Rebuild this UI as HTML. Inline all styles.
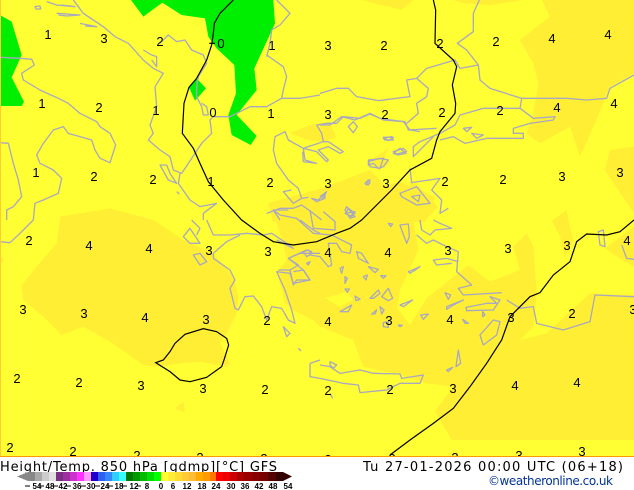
<!DOCTYPE html>
<html><head><meta charset="utf-8"><style>
html,body{margin:0;padding:0;background:#fff;width:634px;height:490px;overflow:hidden}
svg{display:block}
.c path{fill:none;stroke:#a8a8c0;stroke-width:1.3;vector-effect:non-scaling-stroke;stroke-linejoin:round}
.k path{fill:none;stroke:#000;stroke-width:1.2;vector-effect:non-scaling-stroke}
.l text{font:13px "Liberation Sans",sans-serif;text-anchor:middle;fill:#000}
.s text{font:bold 8px "Liberation Sans",sans-serif;text-anchor:middle;fill:#000}
</style></head><body>
<svg width="634" height="490" viewBox="0 0 634 490" xmlns="http://www.w3.org/2000/svg">
<rect width="634" height="457" fill="#ffff33"/>
<g fill="#ffee33">
<g transform="scale(.33333) translate(0,660)">
<path d="M180,0 170,70 110,140 65,195 70,240 130,290 185,345 250,320 330,365 430,435 470,440 540,430 600,425 680,440 690,430 660,370 680,340 710,280 715,230 700,170 640,100 550,60 460,0 330,-35 180,-10Z"/>
<path d="M525,565 550,545 555,578Z"/><path d="M0,105 12,122 0,130Z"/>
</g>
<path d="M290,133 313,124 330,122 336,137 323,142 308,140Z"/>
<path d="M268,203 323,188 370,170 385,185 400,182 435,197 425,222 273,222Z"/>
<path d="M372,160 388,148 380,172Z"/>
<g transform="translate(320,220) scale(.33333)">
<path d="M-141,-30 280,-30 280,0 295,90 240,210 232,265 270,315 320,235 445,135 510,185 600,150 580,80 620,40 640,80 650,220 640,320 600,360 680,340 810,220 942,225 942,660 395,660 345,575 400,500 320,490 240,465 130,440 100,360 0,320 -21,300 -81,270 -105,249 -129,156 -99,120 -114,60Z"/>
<path d="M15,234 81,216 99,240 60,261Z" fill="#ffff33"/>
<path d="M695,0 745,0 760,60 735,110 720,50Z"/>
<path d="M855,85 942,20 942,140 900,115Z"/>
</g>
<g transform="translate(320,0) scale(.33333)">
<path d="M600,120 690,50 665,0 942,0 942,220 870,260 820,380 780,470 750,380 660,430 620,400 640,340 655,250 640,190Z"/>
<path d="M942,440 870,450 855,510 942,640Z"/>
<path d="M125,0 245,30 280,0Z"/><path d="M400,0 435,10 510,15 610,0Z"/>
<path d="M0,370 30,370 50,405 20,440 0,440Z" fill="none"/>
<path d="M190,470 210,485 195,505 170,490Z"/>
<path d="M740,630 700,660 745,660Z"/>
</g>
<path d="M410,182 420,187 438,207 423,222 410,222Z"/>
</g>
<g fill="#00ee00" transform="scale(.33333)">
<path d="M393,0 430,50 487,8 545,45 615,55 625,110 650,145 703,195 708,280 685,345 695,405 752,435 770,408 720,355 710,345 770,270 763,205 825,70 820,0Z"/>
<path d="M567,262 590,235 618,265 585,302Z"/>
<path d="M0,45 35,65 65,165 35,232 72,305 65,318 0,318Z"/>
</g>
<g class="c">
<g transform="scale(.33333)">
<path d="M0,172 60,175 95,178 103,195 65,220 70,240 120,270 175,295 205,310 240,340 290,365 300,380 330,400 347,435 330,488 300,475 285,450 275,420 240,410 205,400 190,380 160,390 130,430 110,465 120,490 160,510 185,535 175,580 130,600 105,610 100,660"/>
<path d="M0,428 25,430 40,490 55,540 65,590 40,620 20,630 20,660"/>
<path d="M220,0 250,40 310,80 345,110 385,130 430,180 460,205 490,220 465,260 470,320 450,375 460,400 445,420 480,450 510,470 520,510 545,520 585,460 605,430 635,400 630,360 640,350 690,350 750,320 800,320 845,295 900,295 960,285"/>
<path d="M480,130 505,105 530,125 555,120 575,150 610,165 620,190 595,230 590,260 590,290 605,320 610,345 625,345 620,320 605,310"/>
<path d="M800,165 850,200 860,230 850,270 845,295"/>
<path d="M830,0 870,40 840,75 815,90 810,130 800,170"/>
<path d="M140,5 170,15 225,20 185,15"/><path d="M170,40 240,45 200,48 175,45"/><path d="M240,70 290,80 255,78"/><path d="M105,20 120,18 122,27 108,27Z"/>
<path d="M430,150 455,165 470,170 470,200 455,180"/>
<path d="M480,495 505,540 530,550 510,520 500,495Z"/>
<path d="M540,520 535,550 570,600 600,620 650,610 610,640 610,660"/>
<path d="M530,575 538,582"/>
</g>
<g transform="translate(260,110) scale(.33333)">
<path d="M170,45 200,40 230,40 250,20 300,25 330,12 360,25 430,35 450,60 480,65"/>
<path d="M170,45 185,70 190,95 130,115 85,90 75,65 45,80 40,120 50,160 85,210 115,235 125,265 100,280 70,245 95,240"/>
<path d="M190,95 205,95 250,125 240,130 205,110 175,120 205,150 200,155 170,125 130,115 135,150 170,160 130,155 128,125"/>
<path d="M155,265 175,270 195,250 195,265 170,275Z"/>
<path d="M125,265 145,262"/>
<path d="M20,310 60,295 100,295 125,285 160,310 185,330"/>
<path d="M60,330 40,300 85,300"/>
<path d="M265,295 285,310 270,318 258,310Z"/>
<path d="M325,155 360,145 385,150 370,170 355,175 340,160 325,165Z"/>
<path d="M315,220 325,210 330,218 320,225Z"/>
<path d="M265,50 280,35 292,50 280,68Z"/>
<path d="M370,85 395,80 400,90 375,90Z"/>
<path d="M400,125 430,115 440,125 410,132Z"/>
</g>
<g transform="translate(0,220) scale(.33333)">
<path d="M0,65 30,68 60,40 100,0"/>
<path d="M550,50 570,25 600,70 570,70Z"/><path d="M575,0 600,25 590,45"/>
<path d="M620,0 640,45 690,45 740,40 790,45 815,40 860,70 880,85 830,60"/>
<path d="M640,100 680,65 720,45"/>
<path d="M640,100 640,115 690,150 705,180 690,205 705,265 715,270 735,230 760,228 785,260 800,300 815,260 845,265 865,300 885,310 875,270 855,210 830,155 870,160 880,190 930,180 910,150 865,115 900,100 960,100"/>
<path d="M580,105 600,100 620,125 600,135Z"/>
<path d="M850,320 870,340 860,350Z"/>
<path d="M930,430 930,470 960,475"/><path d="M930,430 960,420"/>
<path d="M895,385 903,393"/>
<path d="M900,0 940,30 960,40"/>
</g>
<g transform="translate(320,0) scale(.33333)">
<path d="M0,280 50,265 85,265 110,290 175,302 270,290 260,240 290,235 320,205 405,180 420,205 475,195 480,240 510,265 605,295 740,295 800,300 860,295 870,265 942,225"/>
<path d="M475,195 440,150 412,130 460,95 460,40 478,0"/>
<path d="M605,295 600,325 640,355 705,350 700,360 630,370 580,385 580,400 610,400 610,415 500,415 435,430 400,410 360,420"/>
<path d="M30,375 65,350 105,360 150,340 190,360 255,365 265,390 350,385"/>
<path d="M0,375 30,375"/>
<path d="M290,235 325,265 320,290 290,310 295,340 260,370"/>
<path d="M420,345 490,325 590,325 600,325"/>
<path d="M420,345 405,375 360,400 300,425 280,440 280,470 300,450 340,410"/>
<path d="M190,412 220,412 205,422Z"/><path d="M220,460 240,445 258,460 235,465Z"/>
<path d="M145,480 190,475 180,505 150,500Z"/>
<path d="M270,505 275,548 360,535 335,570 365,600 360,640 385,625"/>
<path d="M240,580 290,560 330,610 290,615 245,590Z"/><path d="M275,590 300,585 295,605Z"/>
<path d="M430,385 455,382 440,395Z"/><path d="M455,400 490,405 470,415Z"/>
<path d="M80,620 105,650 90,655 75,630Z"/><path d="M0,590 20,575 5,600"/><path d="M140,545 150,540 145,555Z"/>
</g>
<g transform="translate(260,210) scale(.33333)">
<path d="M85,145 140,120 155,125 150,135 180,140 205,170 215,165 205,100 230,100 245,125 270,130 275,105 225,80 215,75 160,70 110,25 60,15 40,0"/>
<path d="M150,0 160,55 225,60 225,35 190,5"/>
<path d="M85,145 115,165 90,180 55,180"/>
<path d="M90,180 100,225 110,210 150,210 130,180 100,185"/>
<path d="M240,175 250,170 245,190Z"/><path d="M255,200 262,205 255,220Z"/><path d="M255,237 268,237 262,247Z"/><path d="M285,258 300,268 288,272Z"/>
<path d="M240,305 275,285 265,305Z"/><path d="M290,125 305,130 325,160 295,145Z"/><path d="M325,170 355,178 345,188Z"/>
<path d="M310,200 322,195 318,210Z"/><path d="M362,197 378,197 370,205Z"/><path d="M330,265 355,240 360,250 340,265Z"/>
<path d="M365,260 385,235 398,265 385,272Z"/><path d="M335,312 350,300 345,312Z"/><path d="M360,290 372,300 365,312Z"/>
<path d="M420,45 445,42 448,80 440,100 425,60Z"/><path d="M385,40 398,42 392,50Z"/><path d="M445,185 480,170 450,190Z"/>
<path d="M420,285 458,270 430,290Z"/><path d="M140,160 150,155 145,165Z"/><path d="M130,125 145,120 155,130 140,140Z"/>
<path d="M255,10 285,5 275,20Z"/>
</g>
<g transform="translate(320,220) scale(.33333)">
<path d="M0,435 30,440 60,460 120,450 160,460 240,462 245,475 310,465 300,490 240,490 200,510 120,518 115,495 70,490 0,475"/>
<path d="M30,425 50,435 40,445 30,435Z"/>
<path d="M545,218 430,225 415,205 455,195 410,155 415,95 380,80 340,60 320,70 290,45"/>
<path d="M300,0 305,30 330,45 345,30 395,25 360,10 340,0"/>
<path d="M415,125 380,115 340,120 350,135 395,130"/>
<path d="M235,315 247,316 240,320Z"/><path d="M190,308 205,305 205,322 190,320Z"/>
<path d="M302,285 325,282 310,298Z"/>
<path d="M375,218 392,225 385,238Z"/><path d="M380,260 430,240 400,255 380,268Z"/>
<path d="M438,262 500,250 530,250 510,230 540,240 520,270 440,272Z"/>
<path d="M428,298 445,310 435,310Z"/><path d="M488,275 495,285 488,290Z"/>
<path d="M480,345 520,300 540,305 530,345 490,375Z"/>
<path d="M415,390 422,430 408,440Z"/><path d="M380,450 398,442 385,455Z"/>
<path d="M560,240 600,265 640,260 650,310 730,330 810,305 825,225 942,230"/>
<path d="M835,35 850,30 855,80 840,75Z"/>
<path d="M905,75 920,115 942,118"/>
<path d="M30,520 38,535"/>
</g>
</g>
<g class="k">
<g transform="scale(.33333)"><path d="M700,0 660,40 643,70 640,100 635,135 620,180 590,235 567,262 552,310 547,400 580,445 600,490 625,545 670,600 725,660 780,700 820,725 880,735 950,725 1010,700 1050,685 1085,660"/><path d="M628,130H645"/></g>
<g transform="translate(320,0) scale(.33333)"><path d="M125,660 215,570 270,510 335,475 350,420 360,395 405,340 407,310 397,255 410,200 400,180 345,130 347,30 340,0"/></g>
<g transform="translate(320,220) scale(.33333)"><path d="M210,705 270,660 340,610 400,565 450,500 500,430 545,360 570,290 600,260 630,230 660,218 700,165 750,125 770,65 800,42 860,45 900,35 942,0"/></g>
<g transform="translate(0,220) scale(.33333)"><path d="M467,428 490,420 510,395 525,370 555,343 610,326 650,335 680,355 686,375 672,420 665,440 620,472 570,485 540,480 510,455Z"/></g>
</g>
<g class="l">
<text x="48" y="39">1</text><text x="104" y="43">3</text><text x="160" y="46">2</text><text x="221" y="48">0</text><text x="272" y="50">1</text><text x="328" y="50">3</text><text x="384" y="50">2</text><text x="440" y="48">2</text><text x="496" y="46">2</text><text x="552" y="43">4</text><text x="608" y="39">4</text>
<text x="42" y="108">1</text><text x="99" y="112">2</text><text x="156" y="115">1</text><text x="213" y="117">0</text><text x="271" y="118">1</text><text x="328" y="119">3</text><text x="385" y="119">2</text><text x="442" y="117">2</text><text x="500" y="115">2</text><text x="557" y="112">4</text><text x="614" y="108">4</text>
<text x="36" y="177">1</text><text x="94" y="181">2</text><text x="153" y="184">2</text><text x="211" y="186">1</text><text x="270" y="187">2</text><text x="328" y="188">3</text><text x="386" y="188">3</text><text x="445" y="186">2</text><text x="503" y="184">2</text><text x="562" y="181">3</text><text x="620" y="177">3</text>
<text x="29" y="245">2</text><text x="89" y="250">4</text><text x="149" y="253">4</text><text x="209" y="255">3</text><text x="268" y="256">3</text><text x="328" y="257">4</text><text x="388" y="257">4</text><text x="448" y="255">3</text><text x="508" y="253">3</text><text x="567" y="250">3</text><text x="627" y="245">4</text>
<text x="23" y="314">3</text><text x="84" y="318">3</text><text x="145" y="322">4</text><text x="206" y="324">3</text><text x="267" y="325">2</text><text x="328" y="326">4</text><text x="389" y="325">3</text><text x="450" y="324">4</text><text x="511" y="322">3</text><text x="572" y="318">2</text><text x="633" y="314">3</text>
<text x="17" y="383">2</text><text x="79" y="387">2</text><text x="141" y="390">3</text><text x="203" y="393">3</text><text x="265" y="394">2</text><text x="328" y="395">2</text><text x="390" y="394">2</text><text x="453" y="393">3</text><text x="515" y="390">4</text><text x="577" y="387">4</text>
<text x="10" y="452">2</text><text x="73" y="456">2</text><text x="137" y="460">2</text><text x="200" y="462">2</text><text x="264" y="463">2</text><text x="328" y="464">2</text><text x="392" y="463">2</text><text x="455" y="462">3</text><text x="519" y="460">3</text><text x="582" y="456">3</text>
</g>
<rect x="0" y="0" width="1" height="457" fill="#ffcc33"/>
<rect x="0" y="456" width="634" height="1" fill="#ff9900"/>
<rect x="0" y="457" width="634" height="33" fill="#fff"/>
<g font-family="'DejaVu Sans',sans-serif" font-size="13" fill="#000">
<text x="0" y="471" textLength="277" lengthAdjust="spacing">Height/Temp. 850 hPa [gdmp][°C] GFS</text>
<text x="363" y="471" textLength="260" lengthAdjust="spacing">Tu 27-01-2026 00:00 UTC (06+18)</text>
</g>
<text x="488" y="485" font-family="'DejaVu Sans',sans-serif" font-size="12" fill="#003399" textLength="125" lengthAdjust="spacing">©weatheronline.co.uk</text>
<g shape-rendering="crispEdges">
<path d="M28,472V481L17,476.5Z" fill="#888"/>
<rect x="28" y="472" width="7" height="9" fill="#888"/><rect x="35" y="472" width="7" height="9" fill="#aaa"/><rect x="42" y="472" width="7" height="9" fill="#ccc"/><rect x="49" y="472" width="7" height="9" fill="#e0e0e0"/>
<rect x="56" y="472" width="7" height="9" fill="#7a3080"/><rect x="63" y="472" width="7" height="9" fill="#a030a0"/><rect x="70" y="472" width="7" height="9" fill="#cc33cc"/><rect x="77" y="472" width="7" height="9" fill="#ff33ff"/><rect x="84" y="472" width="7" height="9" fill="#ff99ff"/>
<rect x="91" y="472" width="7" height="9" fill="#2200cc"/><rect x="98" y="472" width="7" height="9" fill="#3060f0"/><rect x="105" y="472" width="7" height="9" fill="#3388ff"/><rect x="112" y="472" width="7" height="9" fill="#33ccff"/><rect x="119" y="472" width="7" height="9" fill="#33ffff"/>
<rect x="126" y="472" width="7" height="9" fill="#007700"/><rect x="133" y="472" width="7" height="9" fill="#009900"/><rect x="140" y="472" width="7" height="9" fill="#00bb00"/><rect x="147" y="472" width="7" height="9" fill="#00dd00"/><rect x="154" y="472" width="7" height="9" fill="#00ff00"/>
<rect x="161" y="472" width="7" height="9" fill="#ffff33"/><rect x="168" y="472" width="7" height="9" fill="#ffee33"/><rect x="175" y="472" width="7" height="9" fill="#ffdd33"/><rect x="182" y="472" width="7" height="9" fill="#ffcc33"/><rect x="189" y="472" width="7" height="9" fill="#ffbb33"/><rect x="196" y="472" width="7" height="9" fill="#ffaa00"/><rect x="203" y="472" width="7" height="9" fill="#ff9900"/><rect x="210" y="472" width="6" height="9" fill="#ff7700"/>
<rect x="216" y="472" width="7" height="9" fill="#ff0000"/><rect x="223" y="472" width="7" height="9" fill="#ee0000"/><rect x="230" y="472" width="7" height="9" fill="#cc0000"/><rect x="237" y="472" width="7" height="9" fill="#aa0000"/><rect x="244" y="472" width="8" height="9" fill="#990000"/><rect x="252" y="472" width="8" height="9" fill="#880000"/><rect x="260" y="472" width="8" height="9" fill="#770000"/><rect x="268" y="472" width="8" height="9" fill="#550000"/><rect x="276" y="472" width="7" height="9" fill="#330000"/>
<path d="M283,472V481L292,476.5Z" fill="#330000"/>
</g>
<path d="M25,486H30M39,486H44M52,486H58M65,486H71M80,486H86M94,486H100M107,486H113M121,486H127M137,486H141" stroke="#000" stroke-width="1" shape-rendering="crispEdges"/>
<g class="s">
<text x="37" y="489">54</text><text x="50" y="489">48</text><text x="63" y="489">42</text><text x="77" y="489">36</text><text x="91" y="489">30</text><text x="105" y="489">24</text><text x="119" y="489">18</text><text x="134" y="489">12</text><text x="147" y="489">8</text><text x="161" y="489">0</text><text x="173" y="489">6</text><text x="187" y="489">12</text><text x="202" y="489">18</text><text x="216" y="489">24</text><text x="231" y="489">30</text><text x="245" y="489">36</text><text x="259" y="489">42</text><text x="273" y="489">48</text><text x="288" y="489">54</text>
</g>
</svg>
</body></html>
